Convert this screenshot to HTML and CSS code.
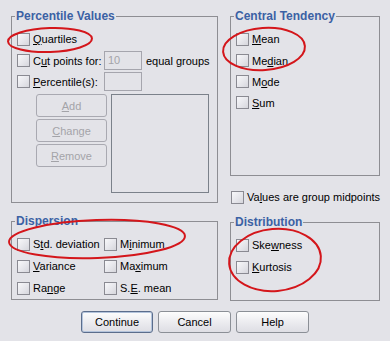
FILE: index.html
```html
<!DOCTYPE html>
<html lang="en">
<head>
  <meta charset="UTF-8" />
  <title>Frequencies: Statistics</title>
  <link rel="stylesheet" href="styles.css">
</head>
<body>
  <div class="dialog">
    <div class="panels">
      <!-- LEFT COLUMN -->
      <div class="col">
        <fieldset class="group percentile">
          <legend>Percentile Values</legend>
          <div class="check"><span class="box"></span><span><u>Q</u>uartiles</span></div>
          <div class="check row-sm">
            <span class="box"></span><span class="field-label">C<u>u</u>t points for:</span>
            <span class="input">10</span><span class="after">equal groups</span>
          </div>
          <div class="check row-sm">
            <span class="box"></span><span class="field-label"><u>P</u>ercentile(s):</span>
            <span class="input"></span>
          </div>
          <div class="pct-lower">
            <div class="pct-buttons">
              <div class="btn disabled"><u>A</u>dd</div>
              <div class="btn disabled"><u>C</u>hange</div>
              <div class="btn disabled"><u>R</u>emove</div>
            </div>
            <div class="list"></div>
          </div>
        </fieldset>

        <fieldset class="group dispersion">
          <legend>Dispersion</legend>
          <div class="grid2">
            <div class="check"><span class="box"></span><span>S<u>t</u>d. deviation</span></div>
            <div class="check"><span class="box"></span><span>M<u>i</u>nimum</span></div>
            <div class="check"><span class="box"></span><span><u>V</u>ariance</span></div>
            <div class="check"><span class="box"></span><span>Ma<u>x</u>imum</span></div>
            <div class="check"><span class="box"></span><span>Ra<u>n</u>ge</span></div>
            <div class="check"><span class="box"></span><span>S.<u>E</u>. mean</span></div>
          </div>
        </fieldset>
      </div>

      <!-- RIGHT COLUMN -->
      <div class="col">
        <fieldset class="group central">
          <legend>Central Tendency</legend>
          <div class="check"><span class="box"></span><span><u>M</u>ean</span></div>
          <div class="check row-sm"><span class="box"></span><span>Me<u>d</u>ian</span></div>
          <div class="check row-sm"><span class="box"></span><span>M<u>o</u>de</span></div>
          <div class="check row-sm"><span class="box"></span><span><u>S</u>um</span></div>
        </fieldset>

        <div class="check midpoints"><span class="box"></span><span>Va<u>l</u>ues are group midpoints</span></div>

        <fieldset class="group distribution">
          <legend>Distribution</legend>
          <div class="check"><span class="box"></span><span>Ske<u>w</u>ness</span></div>
          <div class="check"><span class="box"></span><span><u>K</u>urtosis</span></div>
        </fieldset>
      </div>
    </div>

    <div class="buttons">
      <div class="btn default">Continue</div>
      <div class="btn">Cancel</div>
      <div class="btn">Help</div>
    </div>

    <!-- hand-drawn red marks over the dialog -->
    <svg class="marks" width="390" height="341" viewBox="0 0 390 341">
      <ellipse cx="50" cy="40" rx="42" ry="12" transform="rotate(-2 50 40)" />
      <ellipse cx="264" cy="49" rx="41" ry="21" transform="rotate(-4 264 49)" />
      <ellipse cx="97" cy="239" rx="88" ry="19" transform="rotate(-2 97 239)" />
      <ellipse cx="275" cy="260" rx="46" ry="31" transform="rotate(-5 275 260)" />
    </svg>
  </div>
</body>
</html>
```

FILE: styles.css
```css
/* GLOBAL */
:root {
  --dialog-bg: #e3e3e8;
  --group-border: #8e8e93;
  --title-color: #3b61a4;
  --disabled-text: #a3a3a8;
  --font-family: 'Liberation Sans', Arial, sans-serif;
}

* {
  box-sizing: border-box;
}

html, body {
  margin: 0;
  padding: 0;
  background: var(--dialog-bg);
  font-family: var(--font-family);
  font-size: 11px;
  color: #000;
}

.dialog {
  position: relative;
  width: 390px;
  height: 341px;
  overflow: hidden;
}

/* TWO COLUMN LAYOUT */
.panels {
  display: grid;
  grid-template-columns: 207px 150px;
  column-gap: 12px;
  align-items: start;
  padding: 9px 0 0 11px;
}
.col {
  display: flex;
  flex-direction: column;
}

/* GROUP BOXES */
fieldset.group {
  margin: 0;
  min-width: 0;
  border: 1px solid var(--group-border);
  padding: 5px 4px 0 5px;
}
fieldset.group legend {
  font-size: 12px;
  font-weight: bold;
  line-height: 14px;
  color: var(--title-color);
  padding: 0 1px;
  margin-left: -2px;
}
fieldset.percentile {
  padding-bottom: 9px;
}
fieldset.dispersion {
  margin-top: 11px;
}
fieldset.central {
  padding-bottom: 62px;
}
fieldset.distribution {
  margin-top: 7px;
  padding-bottom: 22px;
}

/* CHECKBOX ROWS */
.check {
  display: flex;
  align-items: center;
  height: 22px;
  white-space: nowrap;
}
.check.row-sm {
  height: 21px;
}
.box {
  flex: none;
  width: 13px;
  height: 13px;
  margin-right: 3px;
  border: 1px solid #8a8a92;
  background: linear-gradient(135deg, #f8f8fa 0%, #e6e6eb 55%, #d6d6dc 100%);
}
.midpoints {
  margin-top: 10px;
  padding-left: 1px;
}
.grid2 {
  display: grid;
  grid-template-columns: 87px auto;
}

/* PERCENTILE FIELDS */
.field-label {
  width: 71px;
}
.input {
  width: 38px;
  height: 19px;
  line-height: 17px;
  padding-left: 3px;
  border: 1px solid #a5a5ad;
  color: var(--disabled-text);
}
.after {
  margin-left: 4px;
}
.pct-lower {
  display: flex;
  gap: 4px;
  margin: 2px 0 0 19px;
}
.pct-buttons {
  display: flex;
  flex-direction: column;
  gap: 2px;
}
.list {
  width: 98px;
  height: 99px;
  border: 1px solid #7b818a;
}

/* BUTTONS */
.btn {
  display: flex;
  align-items: center;
  justify-content: center;
  width: 73px;
  height: 22px;
  border: 1px solid #8b8f96;
  border-radius: 3px;
  background: linear-gradient(#fdfdfd, #ececf0 50%, #dedee4);
}
.btn.disabled {
  width: 71px;
  height: 23px;
  background: var(--dialog-bg);
  border-color: #a9a9b1;
  color: var(--disabled-text);
}
.btn.default {
  width: 72px;
  border-color: #5b6d8c;
  box-shadow: inset 0 0 0 1px #b4c4dc;
}
.buttons {
  display: flex;
  justify-content: center;
  gap: 5px;
  margin-top: 10px;
}

/* RED MARKS OVERLAY */
.marks {
  position: absolute;
  top: 0;
  left: 0;
  pointer-events: none;
}
.marks ellipse {
  fill: none;
  stroke: #d4161b;
  stroke-width: 2;
}
```
